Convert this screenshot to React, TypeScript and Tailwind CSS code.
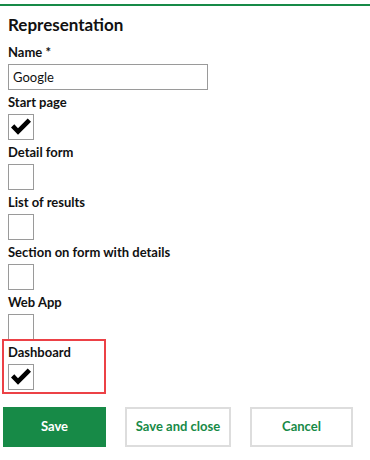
import { useState } from 'react';

const font = { fontFamily: 'Lato, "Open Sans", Arial, sans-serif' };

function CheckMark() {
  return (
    <svg width="22" height="22" viewBox="0 0 22 22" className="block">
      <path d="M1 11.5 L4.3 8.2 L8 12.2 L17.7 2.5 L21 5.8 L8 18.8 Z" fill="#000" />
    </svg>
  );
}

function Checkbox({ checked, onToggle }: { checked: boolean; onToggle: () => void }) {
  return (
    <button
      type="button"
      onClick={onToggle}
      className="w-[26px] h-[26px] border border-[#9a9a9a] bg-white flex items-center justify-center"
    >
      {checked && <CheckMark />}
    </button>
  );
}

interface Field {
  key: string;
  label: string;
}

const fields: Field[] = [
  { key: 'start', label: 'Start page' },
  { key: 'detail', label: 'Detail form' },
  { key: 'list', label: 'List of results' },
  { key: 'section', label: 'Section on form with details' },
  { key: 'webapp', label: 'Web App' },
];

export default function App() {
  const [name, setName] = useState('Google');
  const [values, setValues] = useState<Record<string, boolean>>({
    start: true,
    detail: false,
    list: false,
    section: false,
    webapp: false,
    dashboard: true,
  });

  const toggle = (key: string) => setValues((v) => ({ ...v, [key]: !v[key] }));

  return (
    <div className="w-[370px] h-[460px] bg-white text-[#111] overflow-hidden" style={font}>
      <div className="pt-1">
        <div className="h-[2px] bg-[#178a47]" />
      </div>

      <div className="pl-2">
        {/* Header */}
        <h2 className="mt-[7px] h-6 leading-6 text-[17px] font-bold">Representation</h2>

        {/* Name */}
        <label className="mt-[7px] block h-4 leading-4 text-[13px] font-bold">Name *</label>
        <input
          value={name}
          onChange={(e) => setName(e.target.value)}
          className="mt-1 block w-[200px] h-[26px] border border-[#9a9a9a] px-1 text-[13px] outline-none"
        />

        {/* Checkboxes */}
        {fields.map((f) => (
          <div key={f.key} className="mt-1">
            <div className="h-4 leading-4 text-[13px] font-bold">{f.label}</div>
            <div className="mt-1">
              <Checkbox checked={values[f.key]} onToggle={() => toggle(f.key)} />
            </div>
          </div>
        ))}

        {/* Dashboard (highlighted) */}
        <div className="-ml-[6px] mt-[-1px] w-[104px] border-2 border-[#ec4146] pl-1 pt-[3px] pb-[2px]">
          <div className="h-4 leading-4 text-[13px] font-bold">Dashboard</div>
          <div className="mt-1">
            <Checkbox checked={values.dashboard} onToggle={() => toggle('dashboard')} />
          </div>
        </div>
      </div>

      {/* Actions */}
      <div className="mt-[13px] pl-[3px] flex gap-[19px]">
        <button className="w-[103px] h-10 bg-[#178a47] text-white text-[13px] font-bold">Save</button>
        <button className="w-[106px] h-10 border-2 border-[#dddddd] bg-white text-[#178a47] text-[13px] font-bold">
          Save and close
        </button>
        <button className="w-[103px] h-10 border-2 border-[#dddddd] bg-white text-[#178a47] text-[13px] font-bold">
          Cancel
        </button>
      </div>
    </div>
  );
}
